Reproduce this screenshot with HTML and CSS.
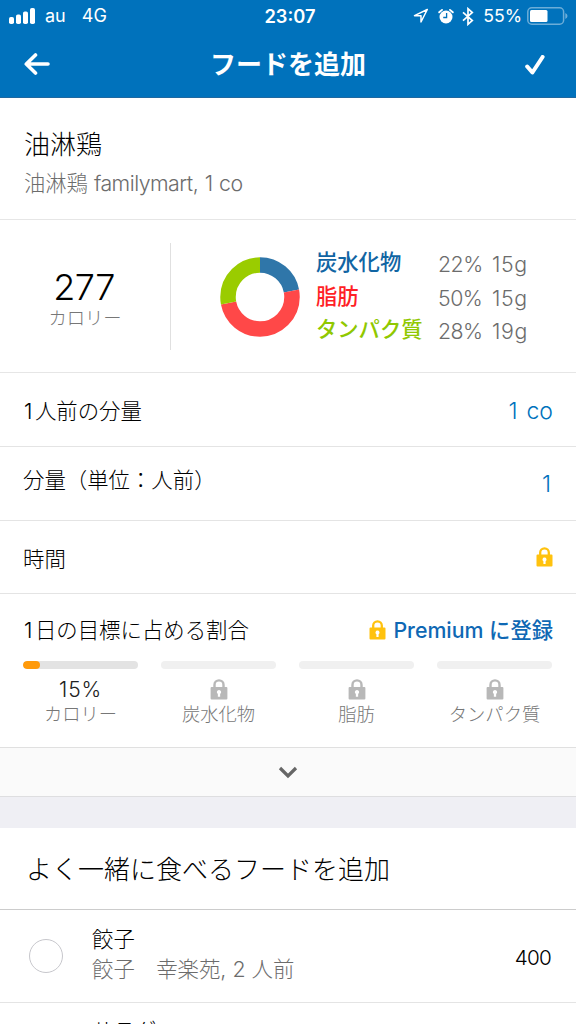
FILE: index.html
```html
<!DOCTYPE html>
<html lang="ja">
<head>
<meta charset="utf-8">
<title>フードを追加</title>
<link rel="stylesheet" href="styles.css">
</head>
<body>
<svg class="defs" width="0" height="0" aria-hidden="true">
  <symbol id="lock" viewBox="0 0 17 20">
    <path d="M4.2 9V5.6a4.3 4.3 0 0 1 8.6 0V9" fill="none" stroke="currentColor" stroke-width="2.3"/>
    <path fill="currentColor" fill-rule="evenodd" d="M1.5 7.500h14q1 0 1 1v10q0 1-1 1h-14q-1 0-1-1V8.500q0-1 1-1zM8.500 10.500a2 2 0 0 0-1.100 3.700V17h2.200v-2.800A2 2 0 0 0 8.500 10.500z"/>
  </symbol>
</svg>
<header class="header">
  <div class="status">
    <div class="status-left">
      <svg width="26" height="16" viewBox="0 0 26 16" fill="#fff"><rect x="0" y="9" width="5" height="7" rx="1.8"/><rect x="7" y="6.500" width="5" height="9.500" rx="1.800"/><rect x="14" y="3.500" width="5" height="12.500" rx="1.800"/><rect x="21" y="0" width="5" height="16" rx="1.800"/></svg>
      <span class="carrier">au</span><span class="network">4G</span>
    </div>
    <div class="clock">23:07</div>
    <div class="status-right">
      <svg class="location" width="16" height="16" viewBox="0 0 16 16"><path d="M14.300 1.500 1.500 7.700H8V14z" fill="none" stroke="#fff" stroke-width="1.500" stroke-linejoin="round"/></svg>
      <svg class="alarm" width="16" height="17" viewBox="0 0 16 17"><circle cx="8" cy="9" r="6.500" fill="#fff"/><path d="M1.200 4.300 4 1.900M14.800 4.300 12 1.900" stroke="#fff" stroke-width="1.900" stroke-linecap="round"/><path d="M8.600 5v4.500H5.200" fill="none" stroke="#0072bc" stroke-width="1.300"/></svg>
      <svg class="bluetooth" width="12" height="19" viewBox="0 0 12 19"><path d="M1 5.300 10.300 13.500 6 17.300v-15.600l4.300 3.800L1 13.700" fill="none" stroke="#fff" stroke-width="1.700"/></svg>
      <span class="percent">55%</span>
      <svg class="battery" width="41" height="18" viewBox="0 0 41 18"><rect x=".8" y=".8" width="35.800" height="16.400" rx="4" fill="none" stroke="#6cadd8" stroke-width="1.500"/><rect x="3" y="3" width="17.500" height="12" rx="1.500" fill="#fff"/><path d="M38.300 6v6q2.200-1 2.200-3t-2.200-3z" fill="#6cadd8"/></svg>
    </div>
  </div>
  <div class="navbar">
    <svg class="back" width="26" height="22" viewBox="0 0 26 22"><path d="M11.500 2 2.300 11l9.200 9M3 11h21" fill="none" stroke="#fff" stroke-width="3.600" stroke-linecap="round" stroke-linejoin="round"/></svg>
    <h1 class="title">フードを追加</h1>
    <svg class="confirm" width="20" height="20" viewBox="0 0 20 20"><path d="m2.200 11.500 5.200 6L17.600 2" fill="none" stroke="#fff" stroke-width="4" stroke-linecap="round" stroke-linejoin="round"/></svg>
  </div>
</header>
<main>
  <section class="food">
    <h2 class="food-name">油淋鶏</h2>
    <p class="food-detail">油淋鶏 <span class="latin">familymart, 1 co</span></p>
  </section>
  <section class="summary">
    <div class="calories">
      <div class="calories-value">277</div>
      <div class="calories-label">カロリー</div>
    </div>
    <svg class="donut" width="80" height="80" viewBox="-40 -40 80 80" fill="none" stroke-width="15.500">
      <g transform="rotate(-90)">
        <circle r="32" stroke="#2f76a9" pathLength="100" stroke-dasharray="22 78"/>
        <circle r="32" stroke="#ff4848" pathLength="100" stroke-dasharray="50 50" stroke-dashoffset="-22"/>
        <circle r="32" stroke="#9acc00" pathLength="100" stroke-dasharray="28 72" stroke-dashoffset="-72"/>
      </g>
    </svg>
    <div class="macros">
      <span class="macro carbs">炭水化物</span><span class="num">22%</span><span class="grams">15g</span>
      <span class="macro fat">脂肪</span><span class="num">50%</span><span class="grams">15g</span>
      <span class="macro protein">タンパク質</span><span class="num">28%</span><span class="grams">19g</span>
    </div>
  </section>
  <div class="row"><span class="row-label"><span class="one">1</span>人前の分量</span><span class="row-value"><span class="one">1</span> co</span></div>
  <div class="row row-servings"><span class="row-label">分量（単位：人前）</span><span class="row-value single">1</span></div>
  <div class="row row-time"><span class="row-label">時間</span><svg class="lock gold" width="17" height="20"><use href="#lock"/></svg></div>
  <section class="goals">
    <div class="goals-head">
      <span class="row-label"><span class="one">1</span>日の目標に占める割合</span>
      <span class="premium"><svg class="lock gold" width="17" height="20"><use href="#lock"/></svg><span class="premium-text">Premium に登録</span></span>
    </div>
    <div class="goals-grid">
      <div class="goal"><div class="bar active"><div class="fill" style="width:15%"></div></div><div class="goal-value percent-value">15%</div><div class="goal-label">カロリー</div></div>
      <div class="goal"><div class="bar"></div><div class="goal-value"><svg class="lock" width="18" height="21"><use href="#lock"/></svg></div><div class="goal-label">炭水化物</div></div>
      <div class="goal"><div class="bar"></div><div class="goal-value"><svg class="lock" width="18" height="21"><use href="#lock"/></svg></div><div class="goal-label">脂肪</div></div>
      <div class="goal"><div class="bar"></div><div class="goal-value"><svg class="lock" width="18" height="21"><use href="#lock"/></svg></div><div class="goal-label">タンパク質</div></div>
    </div>
  </section>
  <div class="expand"><svg width="20" height="13" viewBox="0 0 20 13"><path d="m2 2 8 8 8-8" fill="none" stroke="#666" stroke-width="3.200"/></svg></div>
  <div class="gap"></div>
  <h2 class="pair-title">よく一緒に食べるフードを追加</h2>
  <div class="item">
    <span class="radio"></span>
    <div class="item-text"><div class="item-name">餃子</div><div class="item-detail">餃子　幸楽苑<span class="latin">, 2 </span>人前</div></div>
    <span class="item-cal">400</span>
  </div>
  <div class="item next">
    <div class="item-text"><div class="item-name">サラダ</div></div>
  </div>
</main>
</body>
</html>
```
FILE: styles.css
```css
* { box-sizing: border-box; }
body {
  margin: 0;
  width: 576px;
  height: 1024px;
  overflow: hidden;
  background: #fff;
  color: #000;
  font-family: Inter, "Noto Sans CJK JP", sans-serif;
  font-weight: 300;
}
h1, h2, p { margin: 0; font-weight: 300; }
svg { display: block; flex: none; }
.defs { position: absolute; }
.latin { letter-spacing: -.5px; word-spacing: 1px; }
.one { padding: 0 2.500px 0 1px; }

.header { height: 98px; background: #0072bc; border-bottom: 1px solid #1f68a0; color: #fff; }
.status {
  display: grid;
  grid-template-columns: 1fr auto 1fr;
  height: 32px;
  padding: 0 8px 0 9px;
  font: 400 18px/32px Inter, sans-serif;
}
.status-left, .status-right { display: flex; align-items: center; }
.carrier { margin-left: 10px; }
.network { margin-left: 16px; }
.clock { padding-left: 3px; font-weight: 600; font-size: 18.300px; }
.status-right { justify-content: flex-end; }
.location { margin-right: 1px; }
.alarm { margin-left: 8px; }
.bluetooth { margin-left: 8px; }
.percent { margin: 0 5px 0 9px; font-size: 17.700px; }
.navbar {
  display: flex;
  align-items: center;
  justify-content: space-between;
  height: 65px;
  padding: 0 31px 0 24px;
}
.back { margin-bottom: 2px; }
.title { padding-left: 1px; font: 700 26px/61px "Noto Sans CJK JP", sans-serif; height: 65px; }

.food { height: 122px; padding: 30px 25px 0 24px; border-bottom: 1px solid #e6e6e6; }
.food-name { font-size: 26px; line-height: 34px; }
.food-detail { margin-top: 6px; font-size: 21.300px; line-height: 30px; color: #6c6c6c; }

.summary { display: flex; height: 153px; padding-top: 23px; border-bottom: 1px solid #e6e6e6; }
.calories { width: 171px; height: 107px; padding-top: 24px; border-right: 1px solid #e0e0e0; text-align: center; }
.calories-value { padding-right: 2px; font-size: 36px; line-height: 40px; letter-spacing: -.5px; }
.calories-label { font-size: 18.300px; line-height: 22px; color: #777; }
.donut { margin: 14px 0 0 49px; }
.macros {
  display: grid;
  grid-template-columns: 122px 54px 40px;
  grid-auto-rows: 33.500px;
  margin: 5px 0 0 16px;
  font-size: 21.300px;
  line-height: 32px;
  color: #6c6c6c;
}
.num { letter-spacing: -.5px; }
.grams { letter-spacing: .6px; }
.macro { font-weight: 500; line-height: 29px; }
.carbs { color: #1165a3; }
.fat { color: #ff1f26; }
.protein { color: #90c800; }

.row {
  display: flex;
  justify-content: space-between;
  align-items: center;
  height: 74px;
  padding: 3px 23px 0;
  border-bottom: 1px solid #e4e4e4;
}
.row-servings { padding-top: 1px; }
.row-servings .row-label { margin-bottom: 8px; }
.row-time { height: 73px; padding-top: 4px; }
.row-time .lock { margin-bottom: 4px; }
.row-label { font-size: 21.400px; line-height: 30px; }
.row-value { font-size: 23px; line-height: 30px; color: #0072bc; }
.single { margin-right: 2px; }
.gold { color: #ffc20e; }

.goals { height: 154px; padding: 21px 23px 0; border-bottom: 1px solid #e0e0e0; }
.goals-head, .premium { display: flex; justify-content: space-between; align-items: center; }
.premium { gap: 7px; }
.premium-text { font: 500 21.300px/30px Inter, "Noto Sans CJK JP", sans-serif; color: #0f68b4; }
.goals-grid { display: grid; grid-template-columns: repeat(4, 115px); column-gap: 23px; margin-top: 16px; }
.goal { display: flex; flex-direction: column; align-items: center; }
.bar { width: 100%; height: 8px; border-radius: 4px; background: #f0f0f0; overflow: hidden; }
.active { background: #e3e3e3; }
.fill { height: 100%; border-radius: 4px; background: #ff9a0a; }
.goal-value { display: flex; height: 24px; margin-top: 9px; font-size: 21px; line-height: 24px; color: #222; }
.percent-value { letter-spacing: .8px; }
.goal-value .lock { margin-top: 1px; color: #b8b8b8; }
.goal-label { font-size: 18.300px; line-height: 24px; color: #777; }

.expand { display: flex; align-items: center; justify-content: center; height: 49px; background: #fafafa; border-bottom: 1px solid #dedee0; }
.gap { height: 31px; background: #efeff4; }
.pair-title { height: 82px; padding-left: 26px; border-bottom: 1px solid #ccc; font-size: 26px; line-height: 84px; }
.item { display: flex; align-items: center; height: 93px; padding: 0 25px 0 29px; border-bottom: 1px solid #e4e4e4; }
.radio { width: 34px; height: 34px; border: 1.500px solid #c7c7cc; border-radius: 50%; }
.item-text { margin: 0 0 5px 29px; }
.item-name, .item-detail { font-size: 21.400px; line-height: 30px; }
.item-detail { color: #6c6c6c; }
.item-cal { margin: 3px 0 0 auto; font-size: 20.700px; line-height: 30px; letter-spacing: -.8px; }
.next { align-items: flex-start; height: 22px; padding: 13px 25px 0 63px; border: 0; overflow: hidden; }
```
